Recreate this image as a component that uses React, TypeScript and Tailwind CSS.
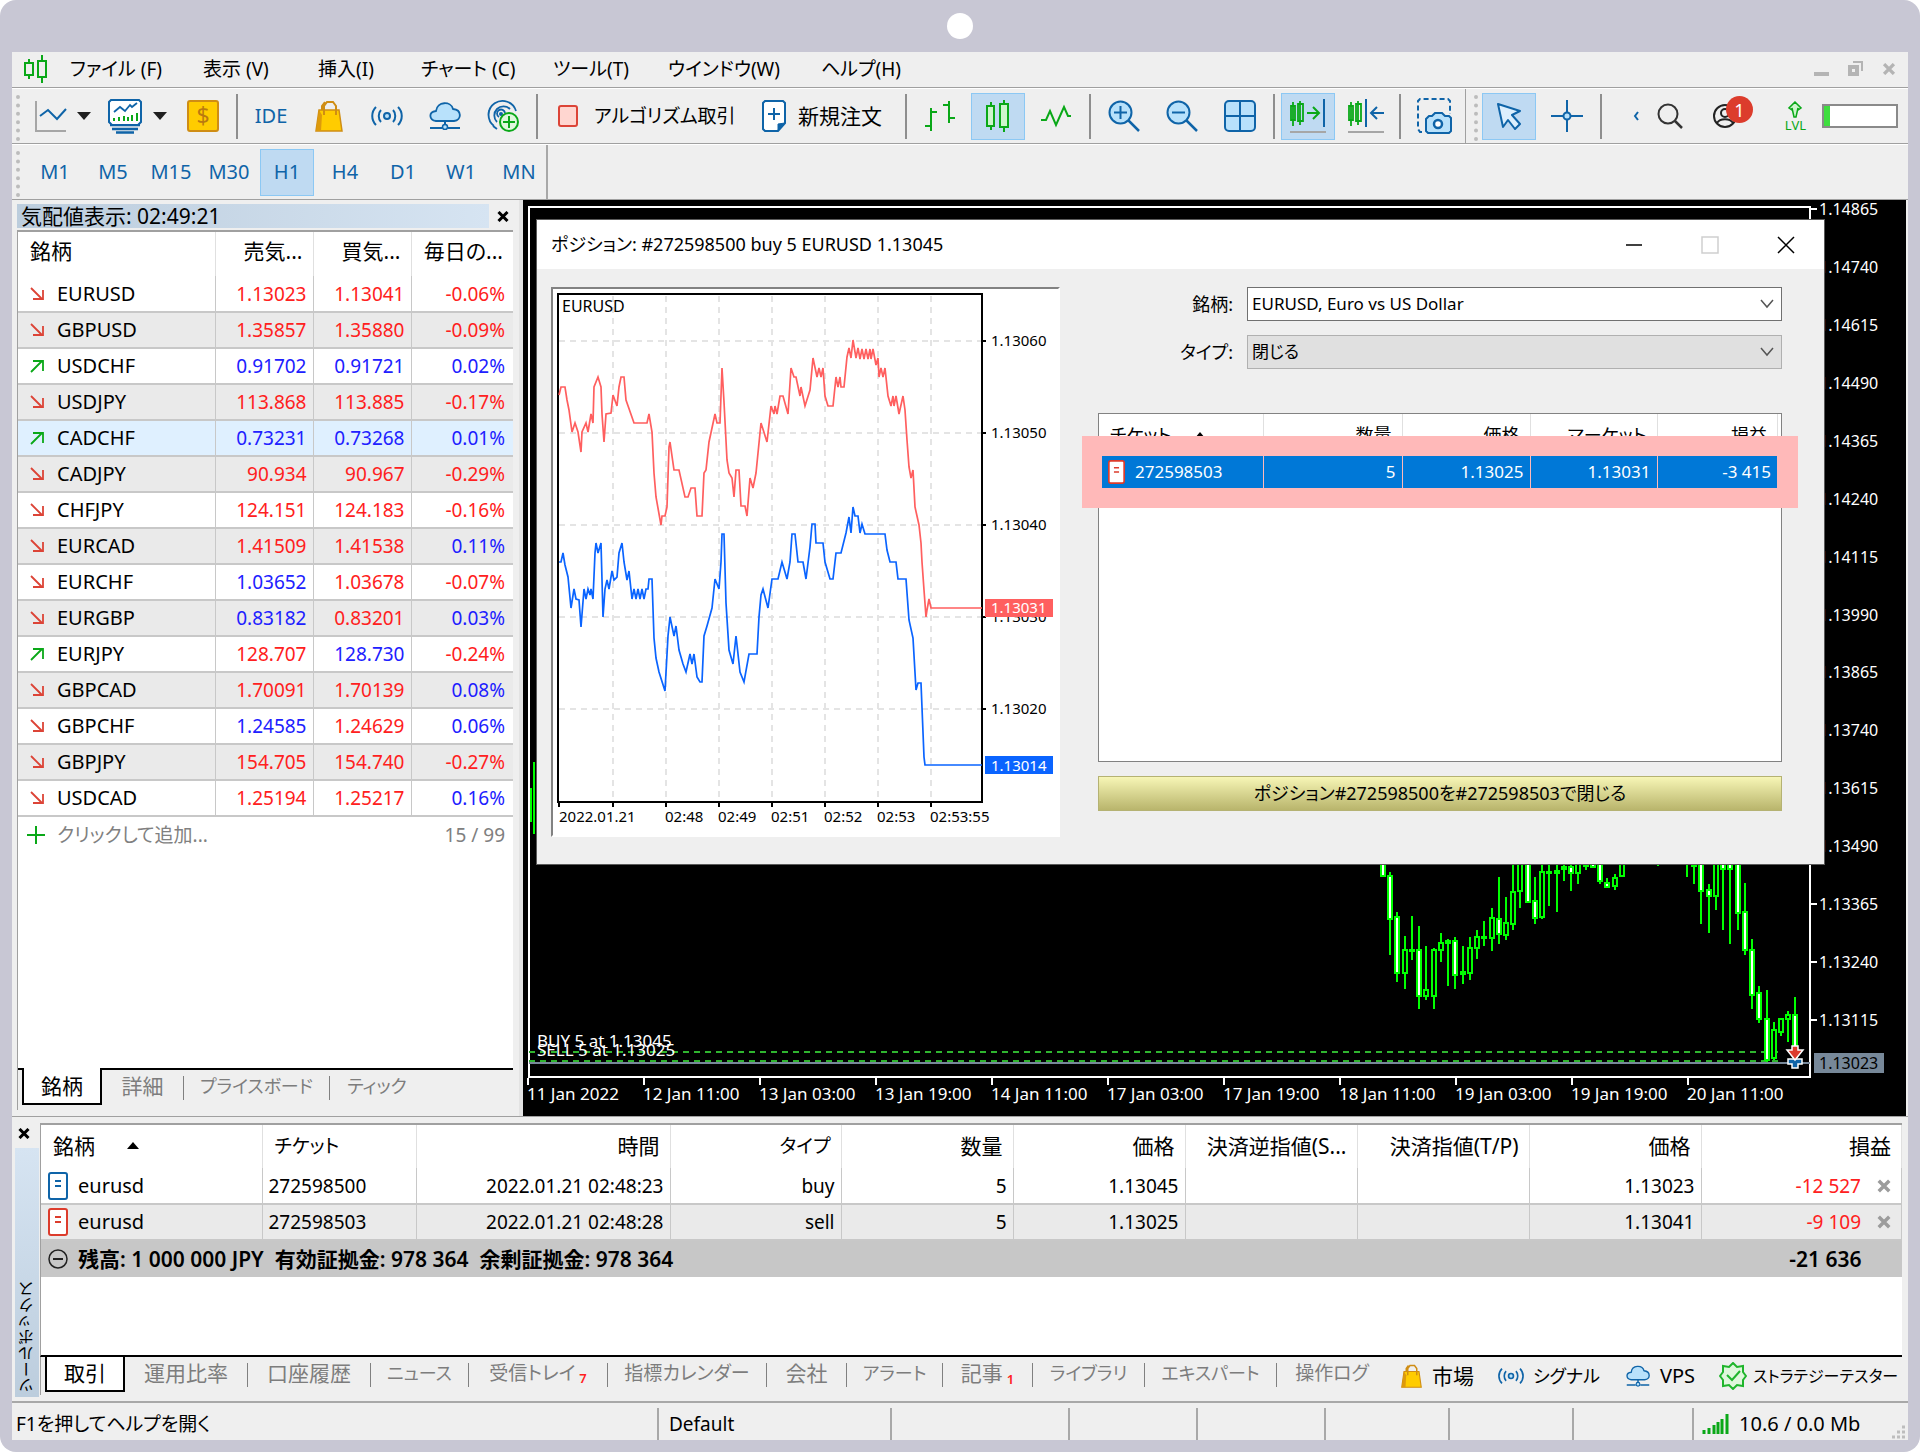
import type { ReactNode } from "react";
import clsx from "clsx";

// ─── Data ─────────────────────────────────────────────────────────────────────

const menus = [
  { label: "ファイル (F)", width: "w-[133px]" },
  { label: "表示 (V)", width: "w-[115px]" },
  { label: "挿入(I)", width: "w-[103px]" },
  { label: "チャート (C)", width: "w-[132px]" },
  { label: "ツール(T)", width: "w-[115px]" },
  { label: "ウインドウ(W)", width: "w-[153px]" },
  { label: "ヘルプ(H)", width: "w-[110px]" },
];

const timeframes = ["M1", "M5", "M15", "M30", "H1", "H4", "D1", "W1", "MN"];

// trend, symbol, bid, bid rising, ask, ask rising, daily change
type Quote = [1 | 0, string, string, 1 | 0, string, 1 | 0, string];

const quotes: Quote[] = [
  [0, "EURUSD", "1.13023", 0, "1.13041", 0, "-0.06%"],
  [0, "GBPUSD", "1.35857", 0, "1.35880", 0, "-0.09%"],
  [1, "USDCHF", "0.91702", 1, "0.91721", 1, "0.02%"],
  [0, "USDJPY", "113.868", 0, "113.885", 0, "-0.17%"],
  [1, "CADCHF", "0.73231", 1, "0.73268", 1, "0.01%"],
  [0, "CADJPY", "90.934", 0, "90.967", 0, "-0.29%"],
  [0, "CHFJPY", "124.151", 0, "124.183", 0, "-0.16%"],
  [0, "EURCAD", "1.41509", 0, "1.41538", 0, "0.11%"],
  [0, "EURCHF", "1.03652", 1, "1.03678", 0, "-0.07%"],
  [0, "EURGBP", "0.83182", 1, "0.83201", 0, "0.03%"],
  [1, "EURJPY", "128.707", 0, "128.730", 1, "-0.24%"],
  [0, "GBPCAD", "1.70091", 0, "1.70139", 0, "0.08%"],
  [0, "GBPCHF", "1.24585", 1, "1.24629", 0, "0.06%"],
  [0, "GBPJPY", "154.705", 0, "154.740", 0, "-0.27%"],
  [0, "USDCAD", "1.25194", 0, "1.25217", 0, "0.16%"],
];

const priceLabels = [
  "1.14865", "1.14740", "1.14615", "1.14490", "1.14365", "1.14240", "1.14115", "1.13990",
  "1.13865", "1.13740", "1.13615", "1.13490", "1.13365", "1.13240", "1.13115",
];

const timeLabels = [
  "11 Jan 2022", "12 Jan 11:00", "13 Jan 03:00", "13 Jan 19:00", "14 Jan 11:00", "17 Jan 03:00",
  "17 Jan 19:00", "18 Jan 11:00", "19 Jan 03:00", "19 Jan 19:00", "20 Jan 11:00",
];

// index, high, body top, body bottom, low, hollow
const candles: [number, number, number, number, number, 1 | 0][] = [
  [0, 0, 0, 36, 37, 0], [1, 32, 36, 79, 115, 0], [2, 72, 77, 133, 142, 0], [3, 96, 110, 133, 149, 1],
  [4, 76, 110, 110, 120, 1], [5, 86, 110, 156, 169, 0], [6, 106, 150, 156, 160, 1], [7, 108, 110, 156, 169, 1],
  [8, 93, 103, 110, 122, 1], [9, 99, 101, 103, 146, 0], [10, 97, 101, 135, 149, 0], [11, 106, 132, 134, 144, 1],
  [12, 97, 108, 133, 140, 1], [13, 90, 97, 108, 119, 1], [14, 81, 97, 98, 106, 1], [15, 68, 78, 98, 111, 1],
  [16, 37, 79, 94, 104, 0], [17, 57, 83, 95, 100, 1], [18, 20, 52, 84, 90, 1], [19, 10, 10, 51, 68, 1],
  [20, 10, 10, 62, 63, 0], [21, 37, 61, 78, 84, 0], [22, 20, 32, 77, 79, 1], [23, 20, 32, 33, 66, 1],
  [24, 20, 31, 33, 72, 0], [25, 20, 27, 29, 41, 0], [26, 20, 27, 33, 51, 0], [27, 10, 10, 33, 44, 1],
  [28, 20, 20, 26, 30, 1], [29, 10, 10, 27, 28, 0], [30, 10, 10, 41, 44, 0], [31, 38, 43, 47, 48, 0],
  [32, 34, 38, 46, 50, 1], [33, 10, 10, 36, 37, 1], [38, 10, 10, 24, 26, 1], [42, 10, 10, 22, 37, 1],
  [43, 10, 10, 26, 44, 0], [44, 10, 10, 51, 84, 0], [45, 44, 50, 56, 93, 0], [46, 10, 10, 56, 70, 1],
  [47, 10, 10, 29, 90, 0], [48, 10, 10, 29, 104, 0], [49, 10, 10, 73, 90, 0], [50, 43, 72, 110, 115, 0],
  [51, 99, 110, 155, 169, 0], [52, 146, 153, 179, 183, 0], [53, 150, 179, 220, 222, 0],
  [54, 182, 190, 218, 220, 1], [55, 179, 179, 192, 196, 1], [56, 171, 175, 179, 202, 1], [57, 157, 175, 217, 219, 0],
];

const askLine =
  "559,395 561,387 565,387 567,400 569,410 572,432 575,423 578,432 581,452 582,432 586,423 588,432 591,414 593,423 594,387 598,377 601,387 602,414 604,442 606,414 611,413 613,395 617,406 619,387 621,377 624,377 626,400 634,423 647,423 649,414 652,432 654,473 656,497 661,525 662,516 665,516 667,507 669,447 670,442 674,470 679,470 685,497 688,497 691,488 695,488 697,516 702,516 704,473 706,470 709,442 715,414 717,423 720,423 722,368 724,402 727,460 729,473 732,478 734,497 736,470 739,470 741,506 745,506 747,516 750,478 753,488 756,473 761,423 767,442 771,406 774,414 775,406 777,414 780,396 783,396 788,414 791,368 794,377 796,377 800,396 801,387 805,406 810,390 813,358 817,377 819,368 821,377 823,368 825,396 828,406 833,406 836,377 838,387 840,377 841,387 844,387 847,357 849,348 851,358 853,340 856,358 858,348 860,359 862,349 864,359 866,349 868,359 870,349 871,359 873,349 876,365 878,358 879,377 881,368 883,377 885,368 888,396 891,406 893,396 894,406 896,396 899,414 903,396 905,410 907,440 909,467 911,478 913,470 915,507 919,525 921,543 922,562 924,590 926,617 927,610 929,599 931,608 982,608";

const bidLine =
  "559,562 561,562 563,553 565,565 568,577 571,608 574,589 576,599 579,600 581,627 584,589 586,599 588,589 590,595 591,589 593,599 595,553 596,543 598,553 601,543 603,617 605,589 607,580 609,589 612,571 614,580 617,577 619,553 622,543 624,562 627,580 629,571 632,599 634,589 636,599 638,589 640,599 642,589 644,599 646,589 648,589 649,579 652,579 654,638 656,658 659,672 665,691 668,636 670,617 674,636 676,626 679,650 683,664 686,672 690,654 692,664 694,654 697,677 700,682 702,682 704,636 707,626 712,608 715,579 719,589 721,562 722,534 724,534 726,603 729,650 733,664 736,636 740,672 744,682 749,654 757,654 759,617 761,595 763,589 768,608 772,579 778,579 782,562 787,579 790,562 792,534 795,534 798,562 803,562 806,579 810,547 812,524 815,524 816,543 823,543 825,562 830,579 833,579 836,553 841,553 846,533 849,517 851,533 853,507 855,516 858,516 860,533 862,524 865,534 885,534 887,550 890,562 896,562 898,579 906,579 909,620 913,638 916,690 918,683 921,683 924,757 925,765 982,765";

const trades = [
  { side: "buy", ticket: "272598500", time: "2022.01.21 02:48:23", open: "1.13045", now: "1.13023", profit: "-12 527" },
  { side: "sell", ticket: "272598503", time: "2022.01.21 02:48:28", open: "1.13025", now: "1.13041", profit: "-9 109" },
];

const toolboxTabs = [
  { label: "運用比率", size: "w-[123px] text-[21px]" },
  { label: "口座履歴", size: "w-[123px] text-[21px]" },
  { label: "ニュース", size: "w-[98px] text-[18px]" },
  { label: "受信トレイ", size: "w-[139px] text-[19px]", count: 7 },
  { label: "指標カレンダー", size: "w-[159px] text-[19px]" },
  { label: "会社", size: "w-[80px] text-[21px]" },
  { label: "アラート", size: "w-[96px] text-[18px]" },
  { label: "記事", size: "w-[90px] text-[21px]", count: 1 },
  { label: "ライブラリ", size: "w-[112px] text-[18px]" },
  { label: "エキスパート", size: "w-[132px] text-[18px]" },
  { label: "操作ログ", size: "w-[110px] text-[19px]" },
];

// ─── Icons ────────────────────────────────────────────────────────────────────

const BLUE = "#0f64a8";
const SKY = "#b8e1fb";
const GREEN = "#0aa818";

function Svg({ w = 32, h = 32, vb, children }: { w?: number; h?: number; vb?: string; children: ReactNode }) {
  return (
    <svg width={w} height={h} viewBox={vb ?? `0 0 ${w} ${h}`} fill="none" strokeWidth={2} className="shrink-0" aria-hidden>
      {children}
    </svg>
  );
}

const Caret = () => (
  <Svg w={14} h={8}>
    <path d="M0 0h14L7 8z" fill="#1f1f1f" />
  </Svg>
);

const LogoIcon = () => (
  <Svg w={24} h={28}>
    <path d="M5 4v4M5 20v4M1 8h8v12H1zM18 0v6M18 22v6M14 6h8v16h-8z" stroke={GREEN} />
  </Svg>
);

const LineChartIcon = () => (
  <Svg>
    <path d="M1 1v30h30" stroke="#a6a6a6" />
    <path d="M5 16l8-6 9 9 9-10" stroke={BLUE} />
  </Svg>
);

const MonitorIcon = () => (
  <Svg w={36} h={36}>
    <path d="M3 27h30M5 31h26M9 34.500h18" stroke={BLUE} strokeWidth={2.5} />
    <path d="M4 2h28l2 2v20l-3 3H5l-3-3V4z" fill="#fff" stroke={BLUE} />
    <path d="M7 14l6-5 5 4 5-6 2 2 5-4" stroke={BLUE} strokeWidth={1.8} />
    <path d="M7 23v-3M12 23v-4M17 23v-5M21 23v-4M25 23v-6M30 23v-8" stroke={GREEN} />
  </Svg>
);

const DollarIcon = () => (
  <Svg>
    <rect x="1" y="1" width="30" height="30" rx="2" fill="#fc0" stroke="#cf8d14" />
    <text x="16" y="24" textAnchor="middle" fontSize="23" fill="#b97a10">$</text>
  </Svg>
);

const BagIcon = ({ w = 28, h = 32 }: { w?: number; h?: number }) => (
  <Svg w={w} h={h} vb="0 0 28 32">
    <path d="M9 14V6l3-4h6l3 4v8M7 12V6l3-4" stroke="#cf8d14" />
    <path d="M4 10h20l3 21H1z" fill="#fc0" stroke="#cf8d14" strokeWidth={1.500} />
    <path d="M4 10l3 5-1 16H1z" fill="#dd9a0c" />
    <path d="M9 10v5M21 10v5" stroke="#cf8d14" />
  </Svg>
);

const SignalIcon = ({ w = 32, h = 22 }: { w?: number; h?: number }) => (
  <Svg w={w} h={h} vb="0 0 32 22">
    <circle cx="16" cy="11" r="3" stroke={BLUE} fill={SKY} />
    <path d="M10 5c-3 3-3 9 0 12M22 5c3 3 3 9 0 12M5 2c-5 5-5 13 0 18M27 2c5 5 5 13 0 18" stroke={BLUE} />
  </Svg>
);

const CloudIcon = ({ w = 32, h = 28 }: { w?: number; h?: number }) => (
  <Svg w={w} h={h} vb="0 0 32 28">
    <path d="M7 19c-7-1-8-9 0-10C8-1 22-1 24 7c9 1 9 11 1 12z" fill={SKY} stroke={BLUE} strokeWidth={1.800} />
    <path d="M16 19v6M1 26h12M19 26h12" stroke={BLUE} />
    <circle cx="16" cy="25" r="2.500" fill={SKY} stroke={BLUE} strokeWidth={1.500} />
  </Svg>
);

const RadarIcon = () => (
  <Svg w={34} h={34}>
    <path d="M8 27A14 14 0 1 1 30 12M11 23A9 9 0 1 1 24 10M4 22A14 14 0 0 1 3 12M13 18a4 4 0 1 1 6-4M11 30l-4-3" stroke={BLUE} strokeWidth={1.800} />
    <circle cx="15" cy="15" r="2" fill={BLUE} />
    <circle cx="23" cy="23" r="9" fill="#dff7dc" stroke={GREEN} />
    <path d="M23 17v12M17 23h12" stroke={GREEN} />
  </Svg>
);

const StopIcon = () => (
  <Svg w={20} h={22}>
    <rect x="1" y="1" width="18" height="20" rx="2" fill="#ffd6d0" stroke="#dc4437" />
  </Svg>
);

const NewOrderIcon = () => (
  <Svg w={24} h={32}>
    <path d="M3 1h18l2 2v20l-7 8H3l-2-2V3z" fill="#fff" stroke={BLUE} />
    <path d="M23 23l-7 8v-7z" fill={BLUE} stroke={BLUE} strokeWidth={1} />
    <path d="M12 8v12M6 14h12" stroke={BLUE} />
  </Svg>
);

const BarsIcon = () => (
  <Svg>
    <path d="M7 8v23M1 26h6M7 12h6M25 1v22M19 5h6M25 18h6" stroke={GREEN} />
  </Svg>
);

const CandlesIcon = () => (
  <Svg w={26} h={32}>
    <path d="M6 2v28M19 0v32" stroke={GREEN} />
    <path d="M2 6h7v20H2zM15 4h8v23h-8z" fill="#cdf5cc" stroke={GREEN} />
  </Svg>
);

const LineIcon = () => (
  <Svg>
    <path d="M1 20h5l4-9 6 14 8-18 4 9h3" stroke={GREEN} />
  </Svg>
);

const ZoomIcon = ({ plus }: { plus?: boolean }) => (
  <Svg>
    <path d="M20 20l11 11" stroke={BLUE} strokeWidth={2.500} />
    <circle cx="12.500" cy="12.500" r="11" fill={SKY} stroke={BLUE} />
    <path d={plus ? "M6 12.500h13M12.500 6v13" : "M6 12.500h13"} stroke={BLUE} />
  </Svg>
);

const GridIcon = () => (
  <Svg>
    <rect x="1" y="1" width="30" height="30" rx="4" fill={SKY} stroke={BLUE} />
    <path d="M16 1v30M1 16h30" stroke={BLUE} />
  </Svg>
);

const AutoScrollIcon = () => (
  <Svg w={36} h={34}>
    <path d="M3 3v24M10 2v24M1 7h4v14H1zM8 5h5v17H8z" stroke={GREEN} strokeWidth={1.800} />
    <path d="M17 14h12M23 8l6 6-6 6" stroke={GREEN} />
    <path d="M34 0v28" stroke={BLUE} />
    <path d="M0 33h36" stroke="#a6a6a6" />
  </Svg>
);

const ShiftIcon = () => (
  <Svg w={36} h={34}>
    <path d="M3 3v24M10 2v24M1 7h4v14H1zM8 5h5v17H8z" stroke={GREEN} strokeWidth={1.800} />
    <path d="M18 0v28M36 14H23M29 8l-6 6 6 6" stroke={BLUE} />
    <path d="M0 33h36" stroke="#a6a6a6" />
  </Svg>
);

const CameraIcon = () => (
  <Svg w={36} h={36}>
    <path d="M6 34H4l-2-3V3l2-2h28l2 2v13" stroke={BLUE} strokeDasharray="5 3" />
    <path d="M13 18h3l3-3h7l3 3h4l2 2v13l-2 2H12l-2-2V21z" fill={SKY} stroke={BLUE} />
    <circle cx="22" cy="26" r="4" fill="#fff" stroke={BLUE} strokeWidth={2.500} />
  </Svg>
);

const PointerIcon = () => (
  <Svg w={26} h={28}>
    <path d="M2 2l22 7-8 4 8 9-5 5-7-9-5 7z" fill="#dceffd" stroke={BLUE} strokeLinejoin="round" />
  </Svg>
);

const CrosshairIcon = () => (
  <Svg>
    <path d="M16 0v12M16 20v12M0 16h12M20 16h12" stroke={BLUE} />
    <circle cx="16" cy="16" r="3.500" fill={SKY} stroke={BLUE} />
  </Svg>
);

const SearchIcon = () => (
  <Svg w={26} h={26}>
    <circle cx="11" cy="11" r="9.500" stroke="#333" />
    <path d="M18 18l7 7" stroke="#333" strokeWidth={2.500} />
  </Svg>
);

const UserIcon = () => (
  <Svg w={24} h={24}>
    <circle cx="12" cy="12" r="11" stroke="#222" />
    <circle cx="12" cy="9" r="4" stroke="#222" />
    <path d="M4 19c3-5 13-5 16 0" stroke="#222" />
  </Svg>
);

const TrendIcon = ({ up }: { up: boolean }) => (
  <Svg w={14} h={14}>
    <path d={up ? "M1 13L12 2M3 2h10v10" : "M1 1l11 11M3 12h10V3"} stroke={up ? GREEN : "#dc4437"} strokeWidth={1.800} />
  </Svg>
);

const OrderIcon = ({ w = 20, h = 28, color }: { w?: number; h?: number; color: string }) => (
  <Svg w={w} h={h} vb="0 0 20 28">
    <rect x="1" y="1" width="18" height="26" rx="2" fill="#fff" stroke={color} />
    <path d="M7 9h6M7 14h6" stroke={color} />
  </Svg>
);

const CrossIcon = ({ w = 12, h = 11, color = "#000" }: { w?: number; h?: number; color?: string }) => (
  <Svg w={w} h={h} vb="0 0 12 11">
    <path d="M1.500 1l9 9M10.500 1l-9 9" stroke={color} strokeWidth={3} />
  </Svg>
);

const TesterIcon = () => (
  <Svg w={28} h={28}>
    <path d="M14 1l4 4 6-1v6l3 4-3 4v6l-6-1-4 4-4-4-6 1v-6l-3-4 3-4V4l6 1z" fill="#dff7dc" stroke="#1fb52c" />
    <path d="M8 13l5 5 8-9" stroke="#1fb52c" />
  </Svg>
);

// ─── Toolbar pieces ───────────────────────────────────────────────────────────

const Grip = () => <span className="mt-1 ml-1 h-[46px] border-l-4 border-dotted border-[#bcbcbc]" />;
const Divider = () => <span className="mx-0.5 h-[45px] w-[2px] shrink-0 bg-[#8e8e8e]" />;

function ToolButton({ label, active, width = "w-[54px]", children }: { label: string; active?: boolean; width?: string; children: ReactNode }) {
  return (
    <button
      type="button"
      aria-label={label}
      className={clsx(
        "flex h-[47px] shrink-0 items-center justify-center border",
        width,
        active ? "border-[#8cc8f4] bg-[#bfdaf2]" : "border-transparent",
      )}
    >
      {children}
    </button>
  );
}

function Toolbar() {
  return (
    <div className="flex h-14 items-center gap-1 overflow-hidden border-b border-[#a0a0a0] border-t border-t-white text-[20px] leading-7">
      <Grip />
      <span className="w-1" />
      <ToolButton label="チャート" width="w-[68px]">
        <span className="flex w-full items-center justify-between pr-2 pl-0.5"><LineChartIcon /><Caret /></span>
      </ToolButton>
      <ToolButton label="プロファイル" width="w-[68px]">
        <span className="flex w-full items-center justify-between pr-1 pl-0.5"><MonitorIcon /><Caret /></span>
      </ToolButton>
      <ToolButton label="通貨"><DollarIcon /></ToolButton>
      <Divider />
      <ToolButton label="IDE"><span className="text-[#0f64a8]">IDE</span></ToolButton>
      <ToolButton label="市場"><BagIcon /></ToolButton>
      <ToolButton label="シグナル"><SignalIcon /></ToolButton>
      <ToolButton label="VPS"><CloudIcon /></ToolButton>
      <ToolButton label="接続"><RadarIcon /></ToolButton>
      <Divider />
      <button type="button" className="flex h-[47px] w-[204px] shrink-0 items-center gap-4 pl-3.5 text-[19px] whitespace-nowrap"><StopIcon />アルゴリズム取引</button>
      <button type="button" className="flex h-[47px] w-[147px] shrink-0 items-center gap-3 pl-2.5 text-[21px] whitespace-nowrap"><NewOrderIcon />新規注文</button>
      <Divider />
      <ToolButton label="バー"><BarsIcon /></ToolButton>
      <ToolButton label="ローソク足" active><CandlesIcon /></ToolButton>
      <ToolButton label="ライン"><LineIcon /></ToolButton>
      <Divider />
      <ToolButton label="拡大"><ZoomIcon plus /></ToolButton>
      <ToolButton label="縮小"><ZoomIcon /></ToolButton>
      <ToolButton label="整列"><GridIcon /></ToolButton>
      <Divider />
      <ToolButton label="自動スクロール" active><AutoScrollIcon /></ToolButton>
      <ToolButton label="シフト"><ShiftIcon /></ToolButton>
      <Divider />
      <ToolButton label="スクリーンショット"><CameraIcon /></ToolButton>
      <span className="h-14 w-px bg-[#a0a0a0]" />
      <Grip />
      <ToolButton label="カーソル" active><PointerIcon /></ToolButton>
      <ToolButton label="十字カーソル"><CrosshairIcon /></ToolButton>
      <Divider />
      <div className="ml-auto flex items-center pr-2.5">
        <Svg w={6} h={10}><path d="M5 1L2 5l3 4" stroke={BLUE} /></Svg>
        <button type="button" aria-label="検索" className="ml-[18px]"><SearchIcon /></button>
        <button type="button" aria-label="通知" className="relative ml-[30px] pr-4">
          <UserIcon />
          <span className="absolute -top-2 right-0 flex size-[27px] items-center justify-center rounded-full bg-[#dc3c2c] text-[18px] text-white">1</span>
        </button>
        <span className="ml-8 flex flex-col items-center text-[13px] leading-3 text-[#0aa818]">
          <Svg w={16} h={18}><path d="M8 1l6 6-3 2v-2l-2 9H7L5 7v2L2 7z" fill="#cdf5cc" stroke={GREEN} strokeWidth={1.500} /></Svg>
          LVL
        </span>
        <span className="ml-4 h-6 w-[76px] border-2 border-[#8a8a8a] bg-white"><span className="block h-full w-1.5 bg-[#3fdd3f]" /></span>
      </div>
    </div>
  );
}

// ─── Market watch ─────────────────────────────────────────────────────────────

const tone = (rising: boolean) => (rising ? "text-[#2020ff]" : "text-[#ff2020]");

function MarketWatch() {
  return (
    <aside className="flex w-[511px] shrink-0 flex-col border-r-4 border-[#e3e3e3] bg-[#efefef] pt-1 pr-1.5 pl-[5px]">
      <div className="flex h-6 items-center">
        <h2 className="h-full flex-1 bg-linear-to-r from-[#bccddd] to-[#d6e4f2] pl-1 text-[21px] leading-6">気配値表示: 02:49:21</h2>
        <button type="button" aria-label="閉じる" className="pr-1 pl-2"><CrossIcon /></button>
      </div>
      <div className="mt-0.5 mb-1.5 flex flex-1 flex-col border-t-2 border-l border-[#a0a0a0]">
        <div className="flex-1 border-b-2 border-black bg-white">
          <table className="w-full table-fixed border-collapse text-[19px] leading-7">
            <colgroup>
              <col className="w-[197px]" />
              <col className="w-[98px]" />
              <col className="w-[98px]" />
              <col />
            </colgroup>
            <thead className="text-[21px]">
              <tr className="h-11 [&>th]:p-0 [&>th]:pb-1.5">
                <th className="border-r border-[#e0e0e0] text-left font-normal"><span className="pl-3">銘柄</span></th>
                <th className="border-r border-[#e0e0e0] text-right font-normal"><span className="pr-2.5">売気...</span></th>
                <th className="border-r border-[#e0e0e0] text-right font-normal"><span className="pr-2.5">買気...</span></th>
                <th className="text-right font-normal"><span className="pr-2.5">毎日の...</span></th>
              </tr>
            </thead>
            <tbody>
              {quotes.map(([up, symbol, bid, bidUp, ask, askUp, change], i) => (
                <tr
                  key={symbol}
                  className={clsx(
                    "h-9 border-b-2 border-[#c8c8c8]",
                    symbol === "CADCHF" ? "bg-[#dff0ff]" : i % 2 ? "bg-[#eaeaea]" : "bg-white",
                  )}
                >
                  <td className="border-r border-[#c8c8c8] p-0 pl-3 text-[20px]">
                    <span className="flex items-center gap-[13px]"><TrendIcon up={up === 1} />{symbol}</span>
                  </td>
                  <td className={clsx("border-r border-[#c8c8c8] p-0 pr-1.5 text-right", tone(bidUp === 1))}>{bid}</td>
                  <td className={clsx("border-r border-[#c8c8c8] p-0 pr-1.5 text-right", tone(askUp === 1))}>{ask}</td>
                  <td className={clsx("p-0 pr-2 text-right", tone(!change.startsWith("-")))}>{change}</td>
                </tr>
              ))}
            </tbody>
          </table>
          <div className="flex h-9 items-center pr-2 pl-2 text-[19px] text-[#808080]">
            <Svg w={20} h={20}><path d="M10 1v18M1 10h18" stroke={GREEN} /></Svg>
            <button type="button" className="ml-[11px]">クリックして追加...</button>
            <span className="ml-auto">15 / 99</span>
          </div>
        </div>
        <div className="flex h-10 items-start pl-1 text-[21px] leading-8 text-[#7d7d7d]">
          <button type="button" className="-mt-0.5 h-[37px] w-20 border-2 border-t-0 border-black bg-white text-black">銘柄</button>
          <button type="button" className="w-[81px]">詳細</button>
          <span className="mt-1.5 h-6 w-px bg-[#808080]" />
          <button type="button" className="w-[145px] text-[18px]">プライスボード</button>
          <span className="mt-1.5 h-6 w-px bg-[#808080]" />
          <button type="button" className="w-[94px] text-[18px]">ティック</button>
        </div>
      </div>
    </aside>
  );
}

// ─── Price chart ──────────────────────────────────────────────────────────────

function PriceChart() {
  return (
    <svg viewBox="523 200 1383 916" className="absolute inset-0 h-full w-full" fontSize="16" shapeRendering="crispEdges" aria-label="EURUSD H1">
      <path d="M529 1077V207h1281v871M528 1077h1282" fill="none" stroke="#fff" strokeWidth="2" />
      {priceLabels.map((label, i) => (
        <g key={label}>
          <path d={`M1810 ${209 + i * 58 - (i >> 3)}h7`} stroke="#fff" strokeWidth="2" />
          <text x="1819" y={215 + i * 58 - (i >> 3)} fill="#fff">{label}</text>
        </g>
      ))}
      {timeLabels.map((label, i) => (
        <g key={label}>
          <path d={`M${528 + i * 116} 1078v7`} stroke="#fff" strokeWidth="2" />
          <text x={527 + i * 116} y="1100" fontSize="17" fill="#fff">{label}</text>
        </g>
      ))}
      <path d="M529 1063h1281" stroke="#778899" strokeWidth="2" />
      <path d="M529 1052h1254M529 1061h1254" stroke="#2fb52f" strokeWidth="2" strokeDasharray="6 5" />
      <path d="M531 788v34M534 762v72" stroke="#0f0" strokeWidth="2" />
      {candles.map(([i, high, top, bottom, low, hollow]) => {
        const x = 1383 + Math.round(i * 7.236);
        return (
          <g key={i} stroke="#0f0">
            <path d={`M${x} ${840 + high}V${840 + low}`} strokeWidth="2" />
            <rect x={x - 2} y={840 + top} width="4" height={Math.max(bottom - top, 1)} fill={hollow ? "#000" : "#fff"} strokeWidth="1.500" />
          </g>
        );
      })}
      <g stroke="#fff" strokeWidth="1.500" shapeRendering="auto">
        <path d="M1788 1059h14v5h-4v4h-6v-4h-4z" fill="#0f64a8" />
        <path d="M1792 1046h6v4h5l-8 10-8-10h5z" fill="#dc3c2c" />
      </g>
      <text x="537" y="1047" fontSize="17" fill="#fff">BUY 5 at 1.13045</text>
      <text x="537" y="1056" fontSize="17" fill="#fff">SELL 5 at 1.13025</text>
      <rect x="1814" y="1053" width="70" height="20" fill="#778899" />
      <text x="1819" y="1069" fill="#000">1.13023</text>
    </svg>
  );
}

function TickChart() {
  const columns = [613, 666, 719, 772, 825, 878, 931];
  const rows = [341, 433, 525, 617, 709];
  const times = ["2022.01.21", "02:48", "02:49", "02:51", "02:52", "02:53", "02:53:55"];
  return (
    <svg viewBox="553 289 505 546" width="505" height="546" fontSize="15" shapeRendering="crispEdges" aria-label="EURUSD">
      <path
        d={columns.map((x) => `M${x} 296V800`).join("") + rows.map((y) => `M559 ${y}H982`).join("")}
        stroke="#e4e4e4"
        strokeWidth="1.500"
        strokeDasharray="6 5"
      />
      <path d="M558 294h424v508H558z" fill="none" stroke="#000" strokeWidth="1.500" />
      <path d={[559, ...columns].map((x) => `M${x} 802v5`).join("") + rows.map((y) => `M982 ${y}h4`).join("")} stroke="#000" strokeWidth="1.500" />
      {rows.map((y, i) => (
        <text key={y} x="991" y={y + 5}>{`1.130${60 - i * 10}`}</text>
      ))}
      {times.map((t, i) => (
        <text key={t} x={i ? 612 + i * 53 : 559} y="822">{t}</text>
      ))}
      <text x="562" y="312" fontSize="16">EURUSD</text>
      <g fill="none" strokeWidth="1.700" shapeRendering="auto">
        <polyline points={askLine} stroke="#ff5f5f" />
        <polyline points={bidLine} stroke="#0a64ff" />
      </g>
      <rect x="985" y="599" width="68" height="18" fill="#ff5f5f" />
      <text x="991" y="613" fill="#fff">1.13031</text>
      <rect x="985" y="756" width="68" height="18" fill="#0a64ff" />
      <text x="991" y="771" fill="#fff">1.13014</text>
    </svg>
  );
}

// ─── Position dialog ──────────────────────────────────────────────────────────

function ComboBox({ id, label, value, disabled }: { id: string; label: string; value: string; disabled?: boolean }) {
  return (
    <div className="flex h-[34px] items-center">
      <label htmlFor={id} className="w-[137px] pr-0.5 text-right text-[18px]">{label}</label>
      <div className="relative ml-3 h-full flex-1">
        <select
          id={id}
          disabled={disabled}
          className={clsx(
            "h-full w-full appearance-none border pl-1 text-[17px] text-black opacity-100",
            disabled ? "border-[#b0b0b0] bg-[#e0e0e0]" : "border-[#707070] bg-white",
          )}
        >
          <option>{value}</option>
        </select>
        <span className="pointer-events-none absolute top-3 right-2">
          <Svg w={14} h={10}><path d="M1 1l6 7 6-7" stroke="#555" strokeWidth={1.500} /></Svg>
        </span>
      </div>
    </div>
  );
}

function PositionDialog() {
  return (
    <section role="dialog" aria-labelledby="position-title" className="absolute top-[19px] right-[81px] left-[13px] border border-[#5a5a5a] bg-[#efefef] pb-[27px]">
      <header className="flex h-[49px] items-center bg-white pr-[29px] pl-3.5">
        <h2 id="position-title" className="flex-1 text-[18px]">ポジション: #272598500 buy 5 EURUSD 1.13045</h2>
        <button type="button" aria-label="最小化" className="mr-[58px]"><Svg w={18} h={18}><path d="M1 9h16" stroke="#000" strokeWidth={1.500} /></Svg></button>
        <button type="button" aria-label="最大化" className="mr-[58px]"><Svg w={18} h={18}><path d="M1 1h16v16H1z" stroke="#cfcfcf" strokeWidth={1.500} /></Svg></button>
        <button type="button" aria-label="閉じる"><Svg w={18} h={18}><path d="M1 1l16 16M17 1L1 17" stroke="#000" strokeWidth={1.500} /></Svg></button>
      </header>
      <div className="flex gap-[38px] pt-[18px] pr-[42px] pl-3.5">
        <div className="border-2 border-t-[#828282] border-r-white border-b-white border-l-[#828282] bg-white">
          <TickChart />
        </div>
        <div className="flex flex-1 flex-col">
          <div className="flex flex-col gap-3.5">
            <ComboBox id="symbol" label="銘柄:" value="EURUSD, Euro vs US Dollar" />
            <ComboBox id="type" label="タイプ:" value="閉じる" disabled />
          </div>
          <div className="relative mt-11 h-[349px] border border-[#828282] bg-white px-[3px]">
            <table className="w-full table-fixed border-collapse text-[17px]">
              <colgroup>
                <col className="w-[161px]" />
                <col className="w-[139px]" />
                <col className="w-[128px]" />
                <col className="w-[127px]" />
                <col />
              </colgroup>
              <thead>
                <tr className="h-[42px] text-[18px] [&>th]:border-r [&>th]:border-[#e0e0e0] [&>th]:pr-2.5 [&>th]:text-right [&>th]:font-normal">
                  <th>
                    <span className="flex items-center gap-6 pl-2">チケット<Svg w={10} h={6}><path d="M5 0l5 6H0z" fill="#000" /></Svg></span>
                  </th>
                  <th>数量</th>
                  <th>価格</th>
                  <th>マーケット</th>
                  <th>損益</th>
                </tr>
              </thead>
              <tbody>
                <tr className="relative z-20 h-8 bg-[#0078d7] text-white [&>td]:border-r [&>td]:border-[#cfe4f5] [&>td]:p-0 [&>td]:pr-1.5 [&>td]:text-right">
                  <td><span className="flex items-center gap-2.5 pl-1.5"><OrderIcon w={17} h={24} color="#dc3c2c" />272598503</span></td>
                  <td>5</td>
                  <td>1.13025</td>
                  <td>1.13031</td>
                  <td>-3 415</td>
                </tr>
              </tbody>
            </table>
            {/* highlight band around the matching position */}
            <div aria-hidden className="absolute top-[22px] -right-[17px] -left-[17px] z-10 h-[72px] bg-[#ffb9b9]" />
          </div>
          <button type="button" className="mt-3.5 h-[35px] border border-[#b5b273] bg-linear-to-b from-[#f7f6b6] to-[#b9b56c] text-[18px]">
            ポジション#272598500を#272598503で閉じる
          </button>
        </div>
      </div>
    </section>
  );
}

// ─── Toolbox ──────────────────────────────────────────────────────────────────

function Toolbox() {
  return (
    <section className="flex h-[285px] border-t border-[#a0a0a0] bg-[#efefef] pt-1.5 pr-1.5">
      <div className="flex w-7 shrink-0 flex-col items-center pb-1">
        <button type="button" aria-label="閉じる" className="flex h-[25px] items-center pr-1 pb-1"><CrossIcon /></button>
        <h2 className="ml-0.5 flex w-6 flex-1 rotate-180 items-center bg-linear-to-b from-[#bccddd] to-[#d6e4f2] pt-1 text-[16px] leading-6 [writing-mode:vertical-rl]">ツールボックス</h2>
      </div>
      <div className="flex min-w-0 flex-1 flex-col">
        <div className="flex-1 border-t-2 border-b-2 border-l border-t-[#a0a0a0] border-b-black border-l-[#a0a0a0] bg-white">
          <table className="w-full table-fixed border-collapse text-[19px] leading-7">
            <colgroup>
              <col className="w-[221px]" />
              <col className="w-[154px]" />
              <col className="w-[254px]" />
              <col className="w-[171px]" />
              <col className="w-[172px]" />
              <col className="w-[172px]" />
              <col className="w-[172px]" />
              <col className="w-[172px]" />
              <col className="w-[172px]" />
              <col />
            </colgroup>
            <thead>
              <tr className="h-[43px] text-[21px] [&>th]:border-r [&>th]:border-[#e0e0e0] [&>th]:p-0 [&>th]:pr-2.5 [&>th]:pb-0.5 [&>th]:text-right [&>th]:font-normal [&>th]:whitespace-nowrap">
                <th><span className="flex items-center gap-8 pl-3">銘柄<Svg w={12} h={7}><path d="M6 0l6 7H0z" fill="#000" /></Svg></span></th>
                <th><span className="block pl-3 text-left text-[19px]">チケット</span></th>
                <th>時間</th>
                <th><span className="text-[19px]">タイプ</span></th>
                <th>数量</th>
                <th>価格</th>
                <th>決済逆指値(S...</th>
                <th>決済指値(T/P)</th>
                <th>価格</th>
                <th>損益</th>
              </tr>
            </thead>
            <tbody className="[&_td]:border-r [&_td]:border-[#c8c8c8] [&_td]:p-0 [&_td]:pr-1.5 [&_td]:text-right">
              {trades.map((t, i) => (
                <tr key={t.ticket} className={clsx("h-9 border-b-2 border-[#c8c8c8]", i % 2 && "bg-[#eaeaea]")}>
                  <td><span className="flex items-center gap-2.5 pl-[7px] text-[20px]"><OrderIcon color={i ? "#dc3c2c" : BLUE} />eurusd</span></td>
                  <td><span className="block pl-1.5 text-left">{t.ticket}</span></td>
                  <td>{t.time}</td>
                  <td>{t.side}</td>
                  <td>5</td>
                  <td>{t.open}</td>
                  <td />
                  <td />
                  <td>{t.now}</td>
                  <td>
                    <span className="flex items-center justify-end gap-4 pr-1 text-[#ff2020]">
                      {t.profit}
                      <button type="button" aria-label="決済"><CrossIcon w={14} h={14} color="#9c9c9c" /></button>
                    </span>
                  </td>
                </tr>
              ))}
            </tbody>
            <tfoot>
              <tr className="h-[37px] bg-[#c7c7c7] text-[21px] font-semibold">
                <td colSpan={9} className="p-0">
                  <span className="flex items-center gap-2.5 pl-[7px] whitespace-pre">
                    <Svg w={20} h={20}><circle cx="10" cy="10" r="9" stroke="#222" strokeWidth={1.500} /><path d="M5 10h10" stroke="#222" /></Svg>
                    {"残高: 1 000 000 JPY  有効証拠金: 978 364  余剰証拠金: 978 364"}
                  </span>
                </td>
                <td className="p-0 pr-10 text-right">-21 636</td>
              </tr>
            </tfoot>
          </table>
        </div>
        <nav className="mb-1.5 flex h-[38px] items-start overflow-hidden border-l border-[#a0a0a0] pl-1 text-[21px] leading-8 whitespace-nowrap text-[#7d7d7d]">
          <button type="button" className="-mt-0.5 h-[37px] w-20 shrink-0 border-2 border-t-0 border-black bg-white text-black">取引</button>
          {toolboxTabs.map((tab, i) => (
            <button key={tab.label} type="button" className={clsx("flex shrink-0 items-start justify-center leading-8", tab.size)}>
              <span className="flex-1">
                {tab.label}
                {tab.count && <sub className="ml-1 text-[13px] font-semibold text-[#ff2020]">{tab.count}</sub>}
              </span>
              {i < toolboxTabs.length - 1 && <span className="mt-1.5 h-6 w-px bg-[#808080]" />}
            </button>
          ))}
          <div className="ml-3 flex h-[38px] items-center text-black">
            <a href="#market" className="flex w-[98px] items-center gap-2.5 pl-0.5"><BagIcon w={21} h={24} />市場</a>
            <a href="#signals" className="flex w-[129px] items-center gap-2 text-[18px]"><SignalIcon w={28} h={18} />シグナル</a>
            <a href="#vps" className="flex w-[93px] items-center gap-2.5 text-[20px]"><CloudIcon w={24} h={24} />VPS</a>
            <a href="#tester" className="flex items-center gap-1.5 text-[16px]"><TesterIcon />ストラテジーテスター</a>
          </div>
        </nav>
      </div>
    </section>
  );
}

function StatusBar() {
  const cell = "h-8 border-l-2 border-[#a8a8a8]";
  return (
    <footer className="flex h-[39px] items-end border-t-2 border-[#a8a8a8] bg-[#efefef] text-[19px] leading-8">
      <span className="w-[645px] pl-1">F1を押してヘルプを開く</span>
      <span className={clsx(cell, "w-[233px] pl-2.5")}>Default</span>
      <span className={clsx(cell, "w-[178px]")} />
      <span className={clsx(cell, "w-[128px]")} />
      <span className={clsx(cell, "w-[128px]")} />
      <span className={clsx(cell, "w-[124px]")} />
      <span className={clsx(cell, "w-[124px]")} />
      <span className={clsx(cell, "w-[120px]")} />
      <span className={clsx(cell, "flex flex-1 items-center gap-2.5 pl-2 text-[20px] whitespace-nowrap")}>
        <Svg w={27} h={20}><path d="M2 20v-4M7 20v-6M12 20v-9M16 20V8M20 20V5M25 20V0" stroke={GREEN} strokeWidth={3} /></Svg>
        10.6 / 0.0 Mb
      </span>
      <Svg w={18} h={18}><path d="M2 15h3M7 15h3M12 15h3M7 10h3M12 10h3M12 5h3" stroke="#bdbdbd" strokeWidth={3} /></Svg>
    </footer>
  );
}

// ─── Window ───────────────────────────────────────────────────────────────────

const App = () => {
  return (
    <div className="flex min-h-screen flex-col rounded-2xl bg-[#c8c7d4] px-3 pb-3 font-['Noto_Sans','Noto_Sans_CJK_JP',sans-serif] text-black [font-feature-settings:'palt']">
      <div className="flex h-[52px] items-center justify-center">
        <span className="size-[26px] rounded-full bg-white" />
      </div>
      <main className="flex flex-1 flex-col bg-[#efefef]">
        <nav className="flex h-9 items-center border-b border-[#a0a0a0] pb-0.5 pl-3 text-[19px] leading-8">
          <LogoIcon />
          <span className="w-[22px]" />
          {menus.map((m) => (
            <button key={m.label} type="button" className={clsx("text-left whitespace-nowrap", m.width)}>{m.label}</button>
          ))}
          <span className="ml-auto flex items-center gap-[19px] pr-3">
            <button type="button" aria-label="最小化"><Svg w={15} h={14}><path d="M0 12h15" stroke="#b4b4b4" strokeWidth={4} /></Svg></button>
            <button type="button" aria-label="元に戻す"><Svg w={15} h={15}><path d="M5 1h9v9" stroke="#b4b4b4" /><path d="M2 6h7v7H2z" stroke="#b4b4b4" strokeWidth={4} /></Svg></button>
            <button type="button" aria-label="閉じる"><CrossIcon w={14} h={12} color="#b4b4b4" /></button>
          </span>
        </nav>
        <Toolbar />
        <div className="flex h-14 items-center gap-1 border-b border-[#a0a0a0] border-t border-t-white text-[20px] text-[#0f64a8]">
          <Grip />
          <span />
          {timeframes.map((tf) => (
            <ToolButton key={tf} label={tf} active={tf === "H1"}>{tf}</ToolButton>
          ))}
          <span className="-ml-1 h-full w-[2px] bg-[#a8a8a8]" />
        </div>
        <div className="flex flex-1">
          <MarketWatch />
          <div className="relative mr-0.5 min-h-[700px] flex-1 bg-black">
            <PriceChart />
            <PositionDialog />
          </div>
        </div>
        <Toolbox />
        <StatusBar />
      </main>
    </div>
  );
};

export default App;
